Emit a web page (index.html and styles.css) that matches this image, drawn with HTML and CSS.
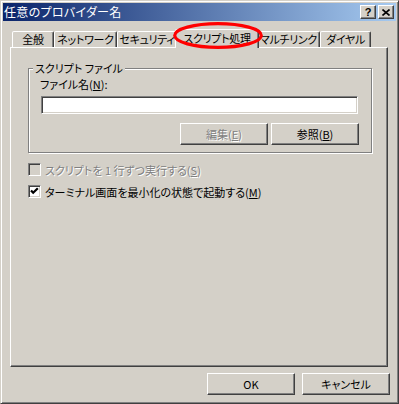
FILE: index.html
```html
<!DOCTYPE html>
<html lang="ja">
<head>
<meta charset="utf-8">
<link rel="stylesheet" href="styles.css">
</head>
<body>
<div class="window">
  <div class="titlebar">
    <span class="title">任意のプロバイダー名</span>
    <div class="caption-btns">
      <div class="cbtn help">?</div>
      <div class="cbtn close"><svg width="8" height="7" viewBox="0 0 8 7"><path d="M0.5 0.5 L7.5 6.5 M7.5 0.5 L0.5 6.5" stroke="#000" stroke-width="1.6" fill="none"/></svg></div>
    </div>
  </div>
  <div class="body">
    <div class="tabs">
      <div class="tab w1">全般</div>
      <div class="tab w2">ネットワーク</div>
      <div class="tab w3">セキュリティ</div>
      <div class="tab sel w4">スクリプト処理</div>
      <div class="tab w5">マルチリンク</div>
      <div class="tab w6">ダイヤル</div>
    </div>
    <div class="panel">
      <fieldset class="group">
        <legend>スクリプト ファイル</legend>
        <div class="label">ファイル名(<u>N</u>):</div>
        <div class="input"></div>
        <div class="btnrow">
          <div class="btn disabled">編集(<u>E</u>)</div>
          <div class="btn">参照(<u>B</u>)</div>
        </div>
      </fieldset>
      <div class="check disabled first">
        <span class="box"></span>
        <span class="ctext">スクリプトを 1 行ずつ実行する(<u>S</u>)</span>
      </div>
      <div class="check second">
        <span class="box checked"><svg width="9" height="9" viewBox="0 0 9 9"><path d="M1 3.5 L3.2 5.8 L7.8 1.2" stroke="#000" stroke-width="2.2" fill="none"/></svg></span>
        <span class="ctext">ターミナル画面を最小化の状態で起動する(<u>M</u>)</span>
      </div>
    </div>
    <div class="footer">
      <div class="btn">OK</div>
      <div class="btn">キャンセル</div>
    </div>
  </div>
  <svg class="highlight" width="90" height="27" viewBox="0 0 90 27"><ellipse cx="45" cy="13.5" rx="43.3" ry="11.8" fill="none" stroke="#ff0000" stroke-width="3.2"/></svg>
</div>
</body>
</html>
```

FILE: styles.css
```css
* { box-sizing: border-box; }

body {
  margin: 0;
  font-family: "Noto Sans CJK JP", "Noto Sans", sans-serif;
  font-size: 11px;
  font-feature-settings: "palt";
  color: #000;
  background: #d4d0c8;
}

u { text-decoration: underline; text-underline-offset: 1px; }

.window {
  position: relative;
  width: 399px;
  height: 404px;
  background: #d4d0c8;
  border: 1px solid;
  border-color: #d4d0c8 #404040 #404040 #d4d0c8;
  box-shadow: inset 1px 1px #fff, inset -1px -1px #808080;
  padding: 2px;
  display: flex;
  flex-direction: column;
}

.titlebar {
  height: 18px;
  flex: none;
  background: linear-gradient(to right, #0a246a, #a6caf0);
  display: flex;
  align-items: center;
  justify-content: space-between;
  padding: 0 2px 0 1px;
  color: #fff;
}

.title {
  font-size: 12px;
  line-height: 18px;
  letter-spacing: 0.3px;
}

.caption-btns {
  display: flex;
  gap: 2px;
}

.cbtn {
  width: 16px;
  height: 14px;
  background: #d4d0c8;
  border: 1px solid;
  border-color: #fff #404040 #404040 #fff;
  box-shadow: inset -1px -1px #808080;
  display: flex;
  align-items: center;
  justify-content: center;
  color: #000;
  font: bold 11px/12px "Liberation Sans", sans-serif;
}

.body {
  flex: 1;
  display: flex;
  flex-direction: column;
  padding: 8px 6px 0 7px;
}

.tabs {
  display: flex;
  align-items: flex-end;
  padding-left: 2px;
  height: 18px;
}

.tab {
  height: 16px;
  border: 1px solid;
  border-bottom: none;
  border-color: #fff #404040 transparent #fff;
  box-shadow: inset -1px 0 #808080;
  border-radius: 2px 2px 0 0;
  text-align: center;
  line-height: 14px;
  font-size: 11px;
  letter-spacing: -0.3px;
  white-space: nowrap;
  background: #d4d0c8;
}

.w1 { width: 42px; }
.w2 { width: 63px; }
.w3 { width: 60px; }
.w4 { width: 80px; }
.w5 { width: 63px; }
.w6 { width: 51px; }

.tab.sel {
  width: 84px;
  height: 19px;
  margin: 0 -2px -1px;
  position: relative;
  z-index: 2;
  line-height: 16px;
}

.panel {
  height: 320px;
  flex: none;
  border: 1px solid;
  border-color: #fff #404040 #404040 #fff;
  box-shadow: inset -1px -1px #808080;
  margin-right: 2px;
  display: flex;
  flex-direction: column;
}

.group {
  margin: 13px 15px 0 17px;
  border: 1px solid #808080;
  box-shadow: inset 1px 1px #fff, 1px 1px #fff;
  padding: 0 0 7px 0;
  min-width: 0;
}

.group legend {
  margin-left: 4px;
  padding: 0 2px;
  line-height: 14px;
  background: #d4d0c8;
}

.label {
  margin: 2px 0 0 11px;
  line-height: 14px;
}

.input {
  height: 18px;
  margin: 5px 13px 0 12px;
  background: #fff;
  border: 1px solid;
  border-color: #808080 #fff #fff #808080;
  box-shadow: inset 1px 1px #404040, inset -1px -1px #d4d0c8;
}

.btnrow {
  display: flex;
  justify-content: flex-end;
  gap: 3px;
  margin: 9px 12px 0 0;
}

.btn {
  width: 88px;
  height: 22px;
  background: #d4d0c8;
  border: 1px solid;
  border-color: #fff #404040 #404040 #fff;
  box-shadow: inset -1px -1px #808080;
  display: flex;
  align-items: center;
  justify-content: center;
  font-size: 11px;
  white-space: nowrap;
}

.disabled, .disabled .ctext {
  color: #808080;
  text-shadow: 1px 1px 0 #fff;
}

.check {
  display: flex;
  align-items: center;
  gap: 4px;
  height: 13px;
  margin-left: 17px;
}

.check.first { margin-top: 10px; }
.check.second { margin-top: 9px; }

.ctext {
  line-height: 14px;
  white-space: nowrap;
}

.box {
  width: 13px;
  height: 13px;
  flex: none;
  border: 1px solid;
  border-color: #808080 #fff #fff #808080;
  box-shadow: inset 1px 1px #404040, inset -1px -1px #d4d0c8;
  background: #fff;
  display: flex;
  align-items: center;
  justify-content: center;
}

.disabled .box { background: #d4d0c8; }

.footer {
  display: flex;
  justify-content: flex-end;
  gap: 7px;
  margin-top: 6px;
}

.footer .btn { height: 22px; }

.highlight {
  position: absolute;
  left: 172px;
  top: 21px;
  z-index: 5;
}
```
